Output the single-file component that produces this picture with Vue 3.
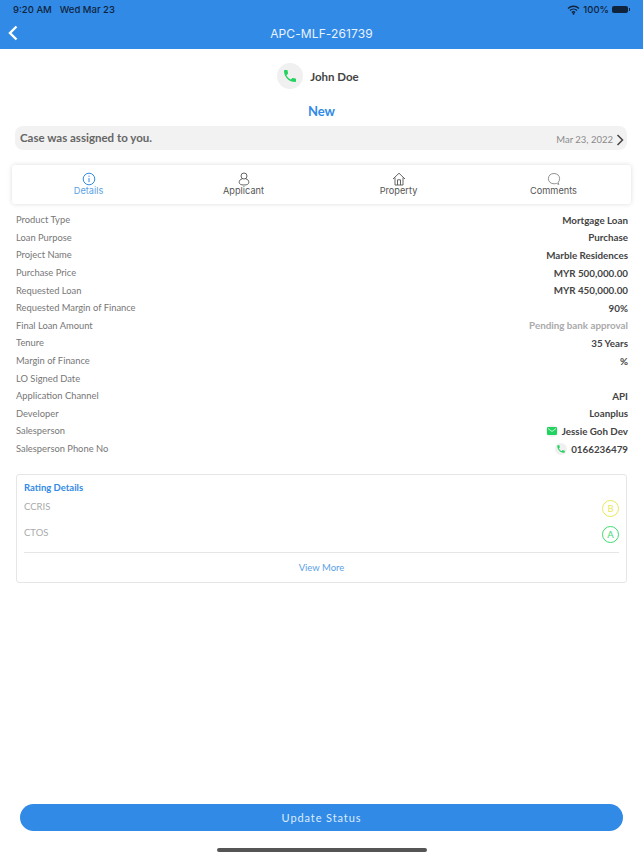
<script setup>
const rows = [
  { label: 'Product Type', value: 'Mortgage Loan' },
  { label: 'Loan Purpose', value: 'Purchase' },
  { label: 'Project Name', value: 'Marble Residences' },
  { label: 'Purchase Price', value: 'MYR 500,000.00' },
  { label: 'Requested Loan', value: 'MYR 450,000.00' },
  { label: 'Requested Margin of Finance', value: '90%' },
  { label: 'Final Loan Amount', value: 'Pending bank approval', muted: true },
  { label: 'Tenure', value: '35 Years' },
  { label: 'Margin of Finance', value: '%' },
  { label: 'LO Signed Date', value: '' },
  { label: 'Application Channel', value: 'API' },
  { label: 'Developer', value: 'Loanplus' },
  { label: 'Salesperson', value: 'Jessie Goh Dev', icon: 'mail' },
  { label: 'Salesperson Phone No', value: '0166236479', icon: 'phone' },
]

const tabs = ['Details', 'Applicant', 'Property', 'Comments']

const ratings = [
  { name: 'CCRIS', grade: 'B', color: '#e8e85a' },
  { name: 'CTOS', grade: 'A', color: '#3ddc6e' },
]

const phonePath = 'M6.6 10.8c1.4 2.8 3.8 5.1 6.6 6.6l2.2-2.2c.3-.3.7-.4 1-.2 1.1.4 2.3.6 3.6.6.6 0 1 .4 1 1V20c0 .6-.4 1-1 1C10.6 21 3 13.4 3 4c0-.6.4-1 1-1h3.5c.6 0 1 .4 1 1 0 1.3.2 2.5.6 3.6.1.3 0 .7-.2 1l-2.3 2.2z'
</script>

<template>
  <div class="page">
    <header class="top">
      <div class="status">
        <span>9:20 AM</span>
        <span class="date">Wed Mar 23</span>
        <span class="status-right">
          <svg width="13" height="10" viewBox="0 0 13 10">
            <path d="M1 3.5a8 8 0 0 1 11 0M3 5.6a5 5 0 0 1 7 0M4.9 7.5a2.3 2.3 0 0 1 3.2 0" fill="none" stroke="#10233c" stroke-width="1.4" />
            <circle cx="6.5" cy="8.8" r="1" fill="#10233c" />
          </svg>
          <span>100%</span>
          <span class="battery"></span>
        </span>
      </div>
      <div class="title-row">
        <svg class="back" width="10" height="16" viewBox="0 0 10 16">
          <path d="M8.5 1.5 2 8l6.5 6.5" fill="none" stroke="#fff" stroke-width="2.4" />
        </svg>
        <span class="title">APC-MLF-261739</span>
      </div>
    </header>

    <div class="contact">
      <span class="call-circle">
        <svg width="16" height="16" viewBox="0 0 24 24"><path :d="phonePath" fill="#22d360" /></svg>
      </span>
      <span class="contact-name">John Doe</span>
    </div>

    <div class="state">New</div>

    <div class="notice">
      <span class="notice-text">Case was assigned to you.</span>
      <span class="notice-side">
        <span>Mar 23, 2022</span>
        <svg width="8" height="12" viewBox="0 0 8 12">
          <path d="M1.5 1 6.5 6l-5 5" fill="none" stroke="#444" stroke-width="1.5" />
        </svg>
      </span>
    </div>

    <nav class="tabs">
      <div v-for="(tab, i) in tabs" :key="tab" class="tab" :class="{ active: i === 0 }">
        <svg v-if="i === 0" width="14" height="14" viewBox="0 0 14 14" fill="none" stroke="#318ae6">
          <circle cx="7" cy="7" r="5.8" />
          <path d="M7 6v4.2M7 3.6v1.2" />
        </svg>
        <svg v-else-if="i === 1" width="14" height="14" viewBox="0 0 14 14" fill="none" stroke="#555" stroke-width=".9">
          <circle cx="7" cy="4" r="3" />
          <path d="M5.5 6.8C3 7.3 2.2 8.7 2.2 10.3c0 1.7 1.4 2.7 4.8 2.7s4.8-1 4.8-2.7c0-1.6-.8-3-3.3-3.5" />
        </svg>
        <svg v-else-if="i === 2" width="14" height="14" viewBox="0 0 14 14" fill="none" stroke="#555" stroke-width=".9">
          <path d="M1 7 7 1.2 13 7M3 5.6V13h8V5.6M5.5 13V7.8h3V13" />
        </svg>
        <svg v-else width="14" height="14" viewBox="0 0 14 14" fill="none" stroke="#777" stroke-width=".8">
          <path d="M7 1.5c3.3 0 5.6 2.1 5.6 5.1 0 1.5-.5 2.8-1.4 3.7l.6 2.2-2.4-1.100c-.8.3-1.600.4-2.400.4-3.300 0-5.600-2.100-5.600-5.200S3.700 1.500 7 1.500z" />
        </svg>
        <span class="tab-label">{{ tab }}</span>
      </div>
    </nav>

    <section class="details">
      <div v-for="row in rows" :key="row.label" class="row">
        <span class="row-label">{{ row.label }}</span>
        <span class="row-value" :class="{ muted: row.muted }">
          <span v-if="row.icon === 'mail'" class="row-icon">
            <svg width="10" height="8" viewBox="0 0 10 8">
              <rect width="10" height="8" rx="1" fill="#22d360" />
              <path d="M1 1.5 5 4.5l4-3" fill="none" stroke="#e9fff0" stroke-width=".8" />
            </svg>
          </span>
          <span v-if="row.icon === 'phone'" class="row-icon">
            <svg width="10" height="10" viewBox="0 0 24 24"><path :d="phonePath" fill="#22d360" /></svg>
          </span>
          {{ row.value }}
        </span>
      </div>
    </section>

    <section class="rating">
      <div class="rating-title">Rating Details</div>
      <div v-for="r in ratings" :key="r.name" class="rating-row">
        <span class="rating-name">{{ r.name }}</span>
        <span class="grade" :style="{ borderColor: r.color, color: r.color }">{{ r.grade }}</span>
      </div>
      <div class="view-more">View More</div>
    </section>

    <button class="update">Update Status</button>
    <div class="home-bar"></div>
  </div>
</template>

<style scoped>
.page {
  width: 643px;
  height: 858px;
  display: flex;
  flex-direction: column;
  overflow: hidden;
  background: #fff;
  font-family: "Lato", "Noto Sans", sans-serif;
  color: #444;
}

.top {
  height: 49px;
  background: #318ae6;
  flex-shrink: 0;
}

.status {
  height: 19px;
  display: flex;
  align-items: center;
  padding: 0 14px 0 13px;
  font-family: "Inter", sans-serif;
  font-size: 9.5px;
  font-weight: 500;
  color: #10233c;
}

.date {
  margin-left: 8px;
}

.status-right {
  margin-left: auto;
  display: flex;
  align-items: center;
  gap: 3px;
}

.battery {
  width: 16px;
  height: 7px;
  margin-right: 1px;
  border-radius: 2px;
  background: #10233c;
  position: relative;
}

.battery::after {
  content: "";
  position: absolute;
  right: -2px;
  top: 2px;
  width: 1px;
  height: 3px;
  background: #10233c;
}

.title-row {
  height: 28px;
  display: flex;
  align-items: center;
  justify-content: center;
  position: relative;
}

.back {
  position: absolute;
  left: 8px;
  top: 6px;
}

.title {
  font-family: "Inter", sans-serif;
  font-size: 12px;
  letter-spacing: 0.1px;
  color: #e9f3fd;
}

.contact {
  margin-top: 14px;
  display: flex;
  align-items: center;
  justify-content: center;
  gap: 7px;
  padding-right: 7px;
}

.call-circle {
  width: 26px;
  height: 26px;
  border-radius: 50%;
  background: #f0f0f0;
  display: flex;
  align-items: center;
  justify-content: center;
}

.contact-name {
  font-size: 11.5px;
  font-weight: 700;
  color: #444;
}

.state {
  margin-top: 13px;
  height: 18px;
  line-height: 18px;
  text-align: center;
  font-size: 13px;
  font-weight: 700;
  color: #318ae6;
}

.notice {
  margin: 6px 16px 0 15px;
  height: 24px;
  border-radius: 8px;
  background: #f2f2f2;
  display: flex;
  justify-content: space-between;
  padding: 0 3px 0 5px;
}

.notice-text {
  font-size: 11.5px;
  font-weight: 700;
  line-height: 24px;
  color: #666;
}

.notice-side {
  display: flex;
  align-items: center;
  gap: 3px;
  padding-top: 3px;
  font-size: 9.5px;
  color: #8a8a8a;
}

.tabs {
  margin: 15px 12px 0;
  height: 39px;
  display: grid;
  grid-template-columns: repeat(4, 155px);
  border-radius: 3px;
  background: #fff;
  box-shadow: 0 0 5px rgba(0, 0, 0, 0.14);
}

.tab {
  display: flex;
  flex-direction: column;
  align-items: center;
  justify-content: center;
  font-family: "Inter", sans-serif;
  font-size: 9.2px;
  color: #555;
  padding: 0 2px 2px 0;
}

.tab.active {
  color: #5b9fe8;
}

.tab svg {
  display: block;
}

.tab-label {
  margin-top: -1px;
}

.details {
  margin-top: 7px;
  padding: 0 15px 0 16px;
}

.row {
  height: 17.6px;
  display: flex;
  align-items: center;
  justify-content: space-between;
  font-size: 9.35px;
}

.row-label {
  color: #777;
}

.row-value {
  display: flex;
  align-items: center;
  gap: 4px;
  font-size: 9.8px;
  font-weight: 700;
  color: #444;
}

.row-value.muted {
  color: #aaa;
}

.row-icon {
  width: 12px;
  height: 12px;
  border-radius: 50%;
  background: #f0f0f0;
  display: flex;
  align-items: center;
  justify-content: center;
}

.rating {
  margin: 17px 16px 0;
  height: 109px;
  box-sizing: border-box;
  padding: 7px 7px 0;
  border: 1px solid #e6e6e6;
  border-radius: 3px;
  display: flex;
  flex-direction: column;
}

.rating-title {
  height: 12px;
  line-height: 12px;
  font-size: 9.5px;
  font-weight: 700;
  color: #318ae6;
}

.rating-row {
  height: 26px;
  display: flex;
  align-items: flex-start;
  justify-content: space-between;
  font-size: 9.5px;
  color: #aaa;
}

.rating-title + .rating-row {
  margin-top: 6px;
}

.rating-name {
  margin-top: 1px;
}

.grade {
  width: 17px;
  height: 17px;
  box-sizing: border-box;
  border: 1px solid;
  border-radius: 50%;
  display: flex;
  align-items: center;
  justify-content: center;
  font-size: 9.5px;
}

.view-more {
  margin-top: 1px;
  height: 29px;
  line-height: 29px;
  border-top: 1px solid #e6e6e6;
  text-align: center;
  font-size: 9.5px;
  color: #5b9fe8;
}

.update {
  margin: auto 20px 0;
  height: 27px;
  flex-shrink: 0;
  border: none;
  border-radius: 14px;
  background: #318ae6;
  color: #dcecfb;
  font-family: "Lato", sans-serif;
  font-size: 11px;
  letter-spacing: 0.9px;
}

.home-bar {
  align-self: center;
  width: 210px;
  height: 4px;
  margin: 17px 0 6px;
  flex-shrink: 0;
  border-radius: 2px;
  background: #555;
}
</style>
